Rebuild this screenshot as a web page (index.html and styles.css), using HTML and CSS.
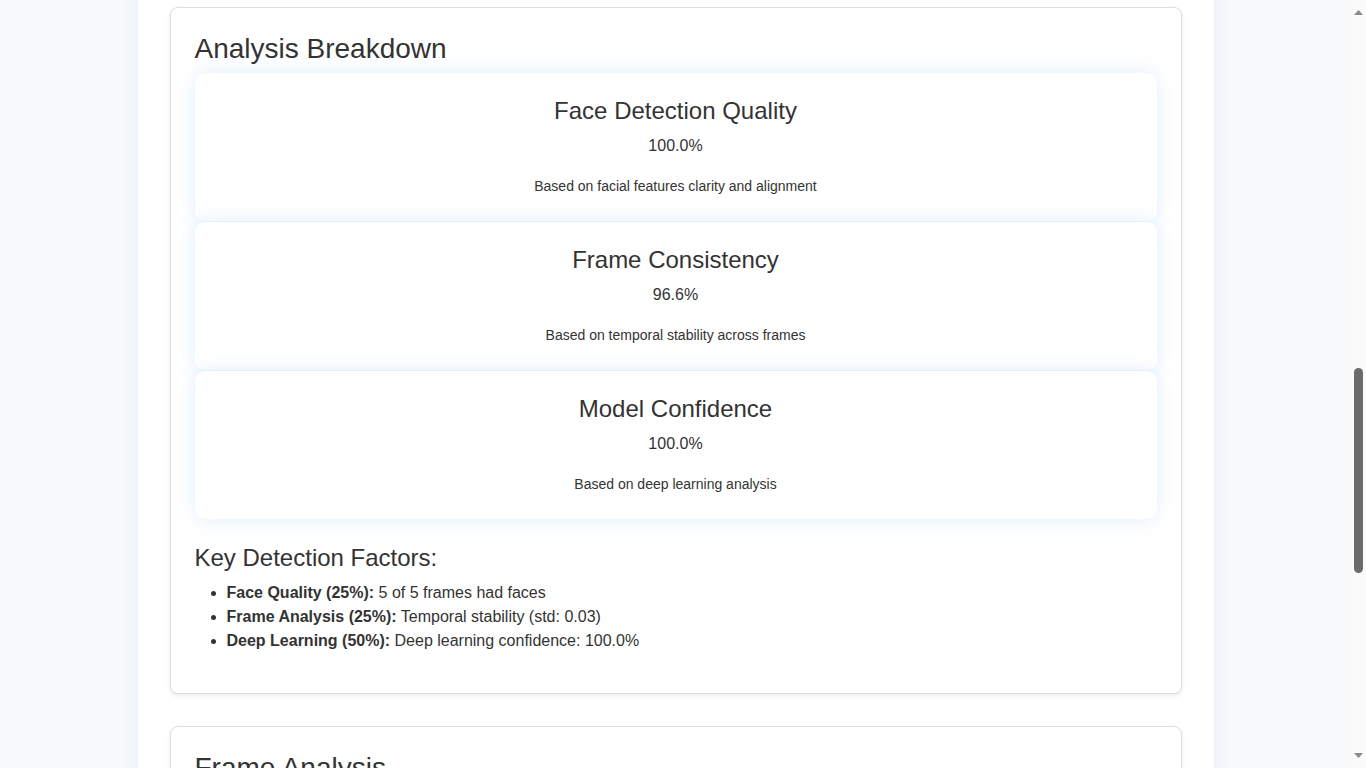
FILE: index.html
```html
<!DOCTYPE html>
<html lang="en">
<head>
<meta charset="utf-8">
<title>Analysis Breakdown</title>
<link rel="stylesheet" href="styles.css">
</head>
<body class="page">
  <div class="viewport">
    <main class="container">
      <section class="section">
        <h2 class="section-title">Analysis Breakdown</h2>
        <div class="metric-list">
          <div class="metric">
            <h3 class="metric-title">Face Detection Quality</h3>
            <p class="metric-value">100.0%</p>
            <p class="metric-desc">Based on facial features clarity and alignment</p>
          </div>
          <div class="metric">
            <h3 class="metric-title">Frame Consistency</h3>
            <p class="metric-value">96.6%</p>
            <p class="metric-desc">Based on temporal stability across frames</p>
          </div>
          <div class="metric">
            <h3 class="metric-title">Model Confidence</h3>
            <p class="metric-value">100.0%</p>
            <p class="metric-desc">Based on deep learning analysis</p>
          </div>
        </div>
        <h3 class="factors-title">Key Detection Factors:</h3>
        <ul class="factors">
          <li><strong>Face Quality (25%):</strong> 5 of 5 frames had faces</li>
          <li><strong>Frame Analysis (25%):</strong> Temporal stability (std: 0.03)</li>
          <li><strong>Deep Learning (50%):</strong> Deep learning confidence: 100.0%</li>
        </ul>
      </section>
      <section class="section">
        <h2 class="section-title">Frame Analysis</h2>
      </section>
    </main>
  </div>
  <div class="scrollbar" aria-hidden="true">
    <svg class="sb-arrow sb-up" width="9" height="5" viewBox="0 0 9 5"><path d="M4.5 0L9 5H0z" fill="#8a8a8a"/></svg>
    <div class="sb-thumb"></div>
    <div class="sb-fill"></div>
    <svg class="sb-arrow sb-down" width="9" height="5" viewBox="0 0 9 5"><path d="M0 0H9L4.5 5z" fill="#8a8a8a"/></svg>
  </div>
</body>
</html>
```
FILE: styles.css
```css
html, body {
  margin: 0;
  padding: 0;
  height: 100%;
  overflow: hidden;
}

.page {
  display: flex;
  background: #f8f9fa;
  font-family: "Liberation Sans", Arial, sans-serif;
  color: #333;
}

.viewport {
  flex: 1;
  min-width: 0;
  height: 100vh;
  overflow: hidden;
}

.container {
  width: 1076px;
  box-sizing: border-box;
  margin: -100px auto 0;
  padding: 107px 32px 0;
  background: #fff;
  box-shadow: 0 0 20px rgba(0, 123, 255, 0.1);
  min-height: 1000px;
}

.section {
  background: #fff;
  border: 1px solid #dedede;
  border-radius: 8px;
  padding: 24px;
  margin-bottom: 32px;
  box-shadow: 0 2px 4px rgba(0, 0, 0, 0.08);
}

.section-title {
  font-size: 28px;
  font-weight: normal;
  line-height: 34px;
  margin: 0 0 7px;
  color: #333;
}

.metric-list {
  display: flex;
  flex-direction: column;
  gap: 1px;
}

.metric {
  background: #fff;
  border-radius: 10px;
  box-shadow: 0 0 20px rgba(0, 123, 255, 0.13);
  padding: 24px 20px 27px;
  text-align: center;
}

.metric-title {
  font-size: 24px;
  font-weight: normal;
  line-height: 28px;
  margin: 0 0 12px;
}

.metric-value {
  font-size: 16px;
  line-height: 18px;
  margin: 0 0 23px;
}

.metric-desc {
  font-size: 14px;
  line-height: 16px;
  margin: 0;
}

.factors-title {
  font-size: 24px;
  font-weight: normal;
  line-height: 28px;
  margin: 25px 0 9px;
}

.factors {
  margin: 0 0 16px;
  padding-left: 32px;
  font-size: 16px;
  line-height: 24px;
}

.scrollbar {
  width: 15px;
  flex: none;
  height: 100vh;
  background: #fbfbfb;
  display: flex;
  flex-direction: column;
  align-items: center;
}

.sb-arrow {
  display: block;
  flex: none;
}

.sb-up {
  margin-top: 10px;
}

.sb-down {
  margin-bottom: 10px;
}

.sb-thumb {
  width: 9px;
  height: 205px;
  margin-top: 353px;
  border-radius: 5px;
  background: #6b6b6b;
  flex: none;
}

.sb-fill {
  flex: 1;
}
```
